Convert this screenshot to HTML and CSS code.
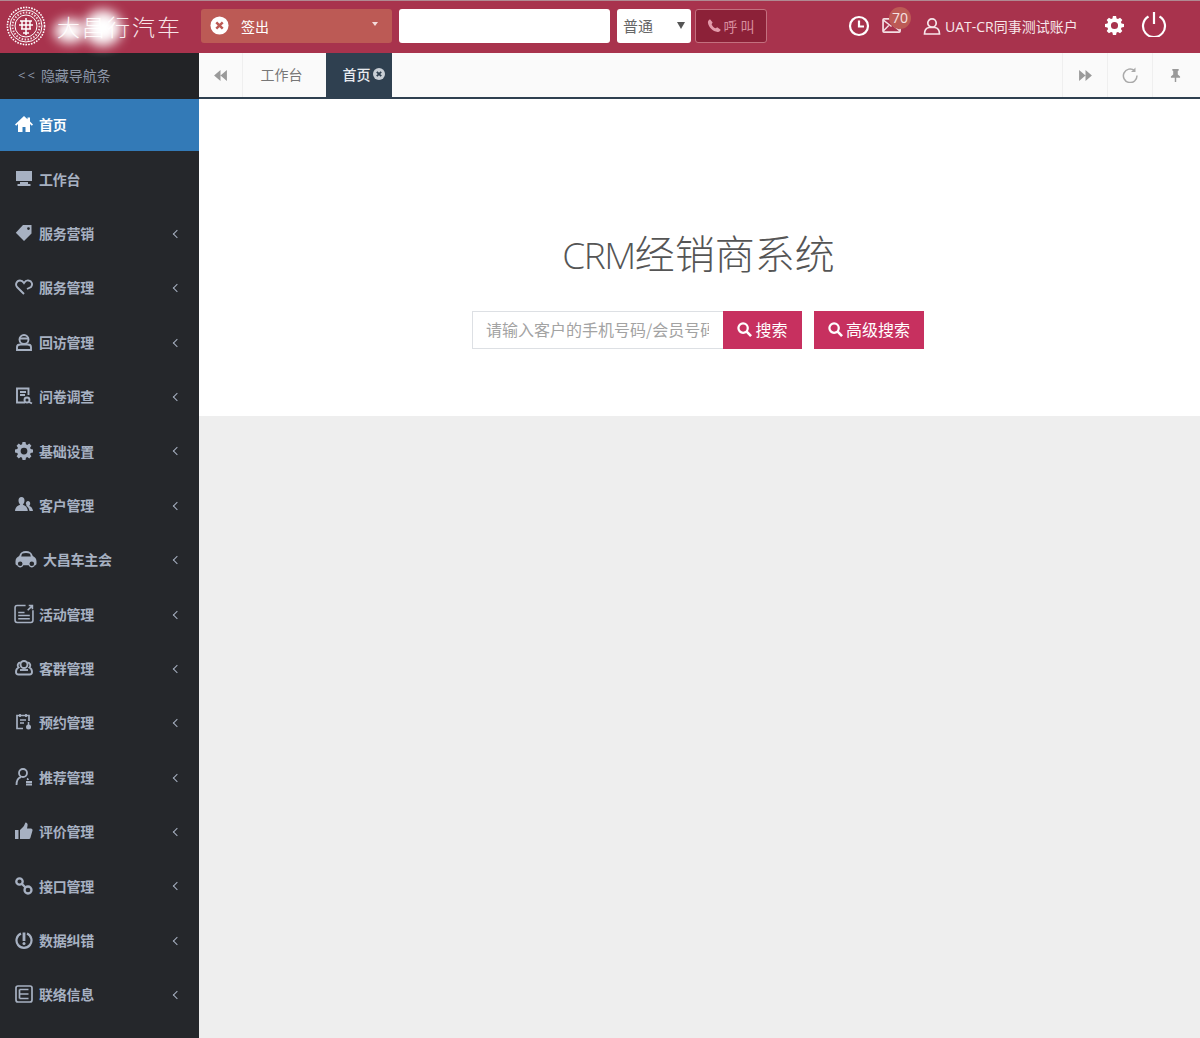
FILE: index.html
```html
<!DOCTYPE html>
<html lang="zh">
<head>
<meta charset="utf-8">
<title>CRM经销商系统</title>
<link rel="stylesheet" href="styles.css">
</head>
<body>
<header class="topbar">
  <div class="logo">
    <svg class="seal" viewBox="0 0 40 40" width="40" height="40"><circle cx="20" cy="20" r="18.6" fill="none" stroke="#fff" stroke-width="1.6" stroke-dasharray="1.6 1.2"/><circle cx="20" cy="20" r="16" fill="none" stroke="#fff" stroke-width="1"/><circle cx="20" cy="20" r="11" fill="none" stroke="#fff" stroke-width="1"/><circle cx="20" cy="20" r="13.5" fill="none" stroke="#fff" stroke-width="2" stroke-dasharray="1.5 1.5" opacity=".8"/><path d="M14 15h12M13 19h14M15 23h10M17 27h6M20 12v17M16 15v8M24 15v8" stroke="#fff" stroke-width="1.5" fill="none"/></svg>
    <span class="logo-text">大昌行汽车</span>
    <span class="smudge smudge-a"></span>
    <span class="smudge smudge-b"></span>
  </div>
  <div class="status">
    <svg viewBox="0 0 20 20" width="19" height="19"><circle cx="10" cy="10" r="9.5" fill="#fff"/><path d="M6.6 6.6l6.8 6.8M13.4 6.6l-6.8 6.8" stroke="#bc5a55" stroke-width="2.6"/></svg>
    <span class="status-label">签出</span>
    <span class="caret"></span>
  </div>
  <input class="phone-input" type="text" aria-label="电话">
  <div class="line-select"><span>普通</span><span class="select-arrow"></span></div>
  <button class="call-btn" type="button">
    <svg viewBox="0 0 16 16" width="15" height="15"><path d="M3.2 1.2L6 4.8 4.9 6.600c.7 1.900 2.300 3.600 4.300 4.400l1.700-1.200 3.700 2.700c-.5 1.600-1.700 2.500-3.200 2.300C6 14.200 1.800 9.800 1 5c-.2-1.600.6-3 2.200-3.800z" fill="#e39aaa"/></svg>
    <span>呼 叫</span>
  </button>
  <div class="top-right">
    <svg class="t-clock" viewBox="0 0 22 22" width="22" height="22"><circle cx="11" cy="11" r="9" fill="none" stroke="#fff" stroke-width="2.200"/><path d="M11 5.500V11.500H16" fill="none" stroke="#fff" stroke-width="2.200"/></svg>
    <div class="mail">
      <svg viewBox="0 0 22 18" width="21" height="17"><rect x="1" y="2" width="18" height="14" rx="1" fill="none" stroke="#f4dfe4" stroke-width="1.800"/><path d="M1 3l9 7M1 15l6-6M19 15l-7-6" fill="none" stroke="#f4dfe4" stroke-width="1.500"/></svg>
      <span class="badge">70</span>
    </div>
    <svg class="t-user" viewBox="0 0 18 18" width="18" height="18"><circle cx="9" cy="6" r="4.200" fill="none" stroke="#f7e6ea" stroke-width="1.700"/><path d="M1.500 17c0-3.600 1.700-6 4.600-6.500h5.800c2.900.5 4.600 2.900 4.600 6.500z" fill="none" stroke="#f7e6ea" stroke-width="1.700"/></svg>
    <span class="user-name">UAT-CR同事测试账户</span>
    <svg class="t-gear" viewBox="0 0 24 24" width="19" height="19"><path fill="#fff" fill-rule="evenodd" d="M10 1h4l.6 3.100 1.800.8L19 3.100 21.900 6l-1.800 2.600.8 1.800L24 11v4l-3.100.6-.8 1.800 1.800 2.600L19 22.900l-2.600-1.800-1.800.8L14 25h-4l-.6-3.100-1.800-.8L5 22.900 2.100 20l1.800-2.600-.8-1.800L0 15v-4l3.100-.6.800-1.800L2.100 6 5 3.100l2.600 1.800 1.800-.8zM12 8.500a4.500 4.500 0 1 0 0 9 4.500 4.500 0 0 0 0-9z" transform="translate(0 -1)"/></svg>
    <svg class="t-power" viewBox="0 0 26 26" width="26" height="26"><path d="M7.500 5.500a11 11 0 1 0 11 0M13 1v12" fill="none" stroke="#fff" stroke-width="2.200"/></svg>
  </div>
</header>

<div class="shell">
  <aside class="sidebar">
    <div class="collapse"><span class="chev">&lt;&lt;</span> 隐藏导航条</div>
    <nav>
      <a class="nav-item active"><svg class="ico" viewBox="0 0 18 18"><path fill="#fff" d="M9 1L0 9.400l1.200 1.300L3 9.100V17h4.500v-5h3v5H15V9.100l1.800 1.600L18 9.400 15 6.600V2.500h-2.500v1.800z"/></svg><span>首页</span></a>
      <a class="nav-item"><svg class="ico" viewBox="0 0 18 18"><path fill="#a7b1c2" d="M1 1h16v10H1zM5 12h8v2h2.500v2h-13v-2H5z"/></svg><span>工作台</span></a>
      <a class="nav-item more"><svg class="ico" viewBox="0 0 18 18"><path fill="#a7b1c2" d="M8 1h8.500v8.500L9 17 .8 8.800zM13.500 3.200a1.400 1.400 0 1 0 0 2.800 1.400 1.400 0 0 0 0-2.800z"/></svg><span>服务营销</span></a>
      <a class="nav-item more"><svg class="ico" viewBox="0 0 18 18"><path fill="none" stroke="#a7b1c2" stroke-width="1.900" d="M9 16L2 9C0 6.500 1.500 2.500 5 2.500c2 0 3 1 4 2.500 1-1.500 2.500-3 4.500-2.500 3.500.5 4.500 4 2.500 6.500L12 11"/></svg><span>服务管理</span></a>
      <a class="nav-item more"><svg class="ico" viewBox="0 0 18 18"><g fill="none" stroke="#a7b1c2" stroke-width="1.900"><circle cx="9" cy="6.500" r="4.500"/><path d="M4.500 5.500h9M2 17v-3c0-1.500 1.500-2.500 3.500-2.500h7c2 0 3.500 1 3.500 2.500v3z"/></g></svg><span>回访管理</span></a>
      <a class="nav-item more"><svg class="ico" viewBox="0 0 18 18"><g fill="none" stroke="#a7b1c2" stroke-width="1.900"><path d="M13.500 8V1.500H2v14h8"/><path d="M5 5h6M5 8h5"/><circle cx="12" cy="13" r="2.500"/><path d="M14 15l3 1.500"/></g></svg><span>问卷调查</span></a>
      <a class="nav-item more"><svg class="ico" viewBox="0 0 24 24"><path fill="#a7b1c2" fill-rule="evenodd" d="M10 0h4l.6 3.100 1.800.8L19 2.100 21.900 5l-1.800 2.600.8 1.800L24 10v4l-3.100.6-.8 1.800 1.800 2.600L19 21.900l-2.600-1.800-1.800.8L14 24h-4l-.6-3.100-1.800-.8L5 21.900 2.100 19l1.800-2.600-.8-1.800L0 14v-4l3.100-.6.800-1.800L2.100 5 5 2.100l2.600 1.800 1.800-.8zM12 7.500a4.500 4.500 0 1 0 0 9 4.500 4.500 0 0 0 0-9z"/></svg><span>基础设置</span></a>
      <a class="nav-item more"><svg class="ico" viewBox="0 0 18 18"><path fill="#a7b1c2" d="M6.500 1c2 0 3 1.500 3 3.500S8.500 8 7.800 8.800c2.700.8 4.700 2.400 5 6.200H0c.300-3.800 2.300-5.400 5.200-6.200C4.500 8 3.500 6.500 3.500 4.500S4.500 1 6.500 1zM13 5c1.300 0 2.200 1 2.200 2.500 0 1-.5 2-1 2.600 2 .6 3.300 2 3.800 4.900h-3.500c-.3-2.200-1.300-3.800-3.200-5 .4-.7 0-1.500-.5-2.400C11 6 11.800 5 13 5z"/></svg><span>客户管理</span></a>
      <a class="nav-item more wide"><svg class="ico car" viewBox="0 0 22 18"><path fill="#a7b1c2" fill-rule="evenodd" d="M11 1c3.500 0 5.800 1.500 6.800 5 2.200 1 3.700 2.700 3.700 5.200v2.300c0 1.100-.7 1.800-1.700 1.800-.5 1.300-1.600 2.200-3 2.200s-2.600-.9-3.100-2.200H8.300c-.5 1.300-1.700 2.200-3.100 2.200s-2.500-.9-3-2.200c-1 0-1.700-.7-1.700-1.800v-2.300c0-2.500 1.500-4.200 3.700-5.200C5.200 2.500 7.500 1 11 1zM7 3.800L6.200 6.500h9.600L15 3.800c-1-.6-2.400-.9-4-.9s-3 .3-4 .9zM5.200 11.500a2.300 2.300 0 1 0 0 4.600 2.300 2.300 0 0 0 0-4.600zm11.600 0a2.300 2.300 0 1 0 0 4.600 2.300 2.300 0 0 0 0-4.600z"/></svg><span>大昌车主会</span></a>
      <a class="nav-item more"><svg class="ico big" viewBox="0 0 19 19"><g fill="none" stroke="#a7b1c2" stroke-width="1.500"><path d="M11 1.500H3C1.800 1.500 1 2.300 1 3.500v12c0 1.200.8 2 2 2h13c1.200 0 2-.8 2-2V6"/><path d="M4 8h6M4 11h11M4 14h11M13 6l4.500-4.500M14 1.500h3.500V5"/></g></svg><span>活动管理</span></a>
      <a class="nav-item more"><svg class="ico" viewBox="0 0 18 18"><g fill="none" stroke="#a7b1c2" stroke-width="1.900"><circle cx="9" cy="5.500" r="3.500"/><path d="M5.500 3.500C2.500 3.500 2 7 3.500 8.500 1.500 9.500 1 11 1 13c0 1.500 1 2.500 2.500 2.500h11c1.500 0 2.500-1 2.500-2.500 0-2-.5-3.500-2.500-4.500C16 7 15.500 3.500 12.500 3.500"/><path d="M5 11h8"/></g></svg><span>客群管理</span></a>
      <a class="nav-item more"><svg class="ico" viewBox="0 0 18 18"><g fill="none" stroke="#a7b1c2" stroke-width="1.700"><path d="M14 8V2.500H2v13h6"/><path d="M5 1v3M11 1v3M5 7h6M5 10h4"/></g><circle cx="13.500" cy="14" r="2.500" fill="#a7b1c2"/><path d="M13.500 9v3" stroke="#a7b1c2" stroke-width="1.500"/></svg><span>预约管理</span></a>
      <a class="nav-item more"><svg class="ico" viewBox="0 0 18 18"><g fill="none" stroke="#a7b1c2" stroke-width="1.800"><circle cx="8" cy="5" r="4"/><path d="M1.500 17c0-4 1.500-7 4.500-7.800M12 10.500c.7.400 1 1 1.200 1.500M11 14h6M11 16.500h6"/></g></svg><span>推荐管理</span></a>
      <a class="nav-item more"><svg class="ico" viewBox="0 0 18 18"><path fill="#a7b1c2" d="M0 8h3.500v9H0zM5 8l3.500-3.500C9.500 3 10 1.500 10.500.500c1.500 0 2.500 1.500 2 3.500l-.5 2.500h4c1 0 1.800 1 1.500 2l-2 7c-.3 1-1 1.500-2 1.500H5z"/></svg><span>评价管理</span></a>
      <a class="nav-item more"><svg class="ico" viewBox="0 0 18 18"><g fill="none" stroke="#a7b1c2" stroke-width="2.300"><circle cx="4.500" cy="4.500" r="3.200"/><circle cx="13" cy="13" r="3.500"/><path d="M7 7l3.500 3.500"/></g></svg><span>接口管理</span></a>
      <a class="nav-item more"><svg class="ico" viewBox="0 0 18 18"><path d="M6 2.500a7.500 7.500 0 1 0 6 0" fill="none" stroke="#a7b1c2" stroke-width="2.200"/><path d="M9 1.500v8.500" stroke="#a7b1c2" stroke-width="2.800"/><circle cx="9" cy="12.500" r="1.500" fill="#a7b1c2"/></svg><span>数据纠错</span></a>
      <a class="nav-item more"><svg class="ico" viewBox="0 0 18 18"><g fill="none" stroke="#a7b1c2" stroke-width="1.700"><rect x="1" y="1" width="16" height="16" rx="2"/><path d="M4.500 4.500h9M4.500 9h9M4.500 13.500h9M4.500 4.500v9"/></g></svg><span>联络信息</span></a>
    </nav>
  </aside>

  <main class="content">
    <div class="tabbar">
      <button class="tab-btn" type="button"><svg viewBox="0 0 14 12" width="13" height="11"><path fill="#9a9a9a" d="M7 0v12L0 6zM14 0v12L7 6z"/></svg></button>
      <span class="tab">工作台</span>
      <span class="tab current">首页<svg viewBox="0 0 12 12" width="12" height="12"><circle cx="6" cy="6" r="6" fill="#c9cfd6"/><path d="M3.800 3.800l4.400 4.400M8.200 3.800L3.800 8.200" stroke="#2f4050" stroke-width="1.800"/></svg></span>
      <span class="tab-fill"></span>
      <button class="tab-btn" type="button"><svg viewBox="0 0 14 12" width="13" height="11"><path fill="#9a9a9a" d="M0 0v12l7-6zM7 0v12l7-6z"/></svg></button>
      <button class="tab-btn" type="button"><svg viewBox="0 0 16 16" width="16" height="16"><path d="M12.500 3.500A6.800 6.800 0 1 0 15 8.500" fill="none" stroke="#a9a9a9" stroke-width="1.500"/><path d="M13.500.500v4.500H9z" fill="#a9a9a9"/></svg></button>
      <button class="tab-btn" type="button"><svg viewBox="0 0 12 14" width="11" height="13"><path fill="#9a9a9a" d="M2.500 0h7v1.500L8.500 2v4l2.500 2v1.500H6.800V14H5.200V9.500H1V8l2.500-2V2l-1-.5z"/></svg></button>
    </div>
    <section class="hero">
      <h1><span class="latin">CRM</span>经销商系统</h1>
      <form class="search">
        <input class="search-input" type="text" placeholder="请输入客户的手机号码/会员号码">
        <button class="search-btn first" type="button"><svg viewBox="0 0 16 16" width="15" height="15"><circle cx="6.500" cy="6.500" r="5" fill="none" stroke="#fff" stroke-width="2.400"/><path d="M10.300 10.300L15 15" stroke="#fff" stroke-width="2.800"/></svg>搜索</button>
        <button class="search-btn second" type="button"><svg viewBox="0 0 16 16" width="15" height="15"><circle cx="6.500" cy="6.500" r="5" fill="none" stroke="#fff" stroke-width="2.400"/><path d="M10.300 10.300L15 15" stroke="#fff" stroke-width="2.800"/></svg>高级搜索</button>
      </form>
    </section>
    <section class="blank"></section>
  </main>
</div>
</body>
</html>
```
FILE: styles.css
```css
* { box-sizing: border-box; }
html, body { height: 100%; }
body {
  margin: 0;
  height: 1038px;
  overflow: hidden;
  display: flex;
  flex-direction: column;
  font-family: "Noto Sans CJK SC", "Open Sans", sans-serif;
  font-size: 14px;
  background: #eee;
}
.topbar {
  height: 53px;
  flex: none;
  display: flex;
  align-items: center;
  background: #a8334d;
  border-top: 1px solid #b08a92;
  padding-bottom: 3px;
}
.logo {
  position: relative;
  width: 201px;
  height: 40px;
  flex: none;
  display: flex;
  align-items: center;
  padding-left: 6px;
  gap: 11px;
  color: #f7e4e8;
}
.seal { flex: none; }
.logo-text {
  font-size: 23px;
  font-weight: 300;
  letter-spacing: 2px;
  white-space: nowrap;
}
.smudge {
  position: absolute;
  background: #fff;
  border-radius: 50%;
  filter: blur(6px);
}
.smudge-a { left: 54px; top: 13px; width: 32px; height: 24px; }
.smudge-b { left: 84px; top: 4px; width: 38px; height: 36px; }
.status {
  width: 191px;
  height: 34px;
  flex: none;
  display: flex;
  align-items: center;
  background: #bc5a55;
  border-radius: 3px;
  padding: 0 10px 0 9px;
  color: #fff;
}
.status-label { margin-left: 12px; font-size: 14px; }
.caret {
  margin-left: auto;
  margin-right: 4px;
  border: 3.500px solid transparent;
  border-top: 4px solid #f4dcdc;
  border-bottom: 0;
  margin-top: -4px;
}
.phone-input {
  width: 211px;
  height: 34px;
  flex: none;
  margin-left: 7px;
  border: 0;
  border-radius: 3px;
  background: #fff;
}
.line-select {
  width: 74px;
  height: 34px;
  flex: none;
  margin-left: 7px;
  display: flex;
  align-items: center;
  justify-content: space-between;
  padding: 0 6px;
  border-radius: 3px;
  background: #fff;
  color: #666;
  font-size: 15px;
}
.select-arrow {
  border: 4px solid transparent;
  border-top: 7px solid #555;
  border-bottom: 0;
}
.call-btn {
  width: 72px;
  height: 34px;
  flex: none;
  margin-left: 4px;
  display: flex;
  align-items: center;
  justify-content: center;
  gap: 1px;
  padding: 0;
  background: #8c2138;
  border: 1px solid #c4707f;
  border-radius: 3px;
  color: #d78d9e;
  font: 14px "Noto Sans CJK SC", sans-serif;
}
.top-right {
  flex: 1;
  display: flex;
  align-items: center;
  padding-left: 81px;
  color: #f7e6ea;
}
.mail { position: relative; margin-left: 12px; height: 17px; display: flex; }
.badge {
  position: absolute;
  left: 7px;
  top: -10px;
  width: 22px;
  height: 22px;
  border-radius: 50%;
  background: #bc5a55;
  color: #f5e3e3;
  font: 14px/22px "Open Sans", sans-serif;
  text-align: center;
}
.t-user { margin-left: 20px; }
.user-name { margin-left: 4px; font: 14px "Open Sans", "Noto Sans CJK SC", sans-serif; white-space: nowrap; }
.t-gear { margin-left: 27px; }
.t-power { margin-left: 17px; margin-top: -3px; }

.shell { flex: 1; display: flex; min-height: 0; }
.sidebar { width: 199px; flex: none; background: #25272b; }
.collapse {
  height: 46px;
  background: #222326;
  display: flex;
  align-items: center;
  padding: 0 0 3px 18px;
  gap: 4px;
  color: #8d96a8;
  font-size: 14px;
}
.chev { letter-spacing: 2px; font-family: "Open Sans", sans-serif; font-size: 13px; }
.nav-item {
  height: 54.400px;
  display: flex;
  align-items: center;
  padding: 0 0 2px 15px;
  position: relative;
  color: #a7b1c2;
  font-size: 14px;
  font-weight: 700;
}
.nav-item span { margin-left: 6px; letter-spacing: -.25px; }
.ico { width: 18px; height: 18px; flex: none; }
.car { width: 22px; }
.big { width: 20px; height: 20px; margin-left: -1px; margin-right: -1px; }
.active { height: 52px; margin-bottom: 1.400px; background: #337ab7; color: #fff; }
.more::after {
  content: "";
  position: absolute;
  left: 174px;
  top: 24px;
  width: 5px;
  height: 5px;
  border-left: 1.500px solid #a7b1c2;
  border-bottom: 1.500px solid #a7b1c2;
  transform: rotate(45deg);
}

.content { flex: 1; display: flex; flex-direction: column; min-width: 0; }
.tabbar {
  height: 46px;
  flex: none;
  display: flex;
  background: #fafafa;
  border-bottom: 2px solid #2f4050;
}
.tab-btn {
  width: 45px;
  flex: none;
  display: flex;
  align-items: center;
  justify-content: center;
  padding: 0;
  background: transparent;
  border: 0;
  border-right: 1px solid #efefef;
}
.tab-btn:nth-last-child(-n+3) { border-right: 0; border-left: 1px solid #efefef; }
.tab-btn:first-child { width: 44px; }
.tabbar .tab-btn:last-child { margin-right: 3px; }
.tab {
  width: 83px;
  display: flex;
  align-items: center;
  justify-content: center;
  padding: 0 6px 2px 0;
  color: #777;
  font-size: 14px;
}
.tab.current {
  width: 66px;
  background: #2f4050;
  color: #e8ebef;
  font-weight: 500;
  gap: 2px;
  padding: 0 0 2px 9px;
}
.tab-fill { flex: 1; }
.hero {
  height: 317px;
  flex: none;
  background: #fff;
  text-align: center;
}
.hero h1 {
  margin: 128px 0 0;
  padding-right: 2px;
  height: 50px;
  font-size: 40px;
  line-height: 50px;
  font-weight: 300;
  color: #555;
}
.latin {
  font-family: "Open Sans", sans-serif;
  font-weight: 300;
  font-size: 37px;
  letter-spacing: -1.500px;
  margin-right: 0;
}
.search {
  display: flex;
  margin: 34px 0 0 273px;
}
.search-input {
  width: 251px;
  height: 38px;
  padding: 0 14px 2px 13px;
  border: 1px solid #dde0e4;
  border-right: 0;
  background: #fff;
  font: 16px "Noto Sans CJK SC", sans-serif;
  color: #555;
  outline: 0;
}
.search-input::placeholder { color: #a3a3a3; opacity: 1; }
.search-btn {
  height: 38px;
  display: flex;
  align-items: center;
  justify-content: center;
  gap: 3px;
  padding: 0 0 2px;
  border: 0;
  background: #c7305f;
  color: #fff;
  font: 16px "Noto Sans CJK SC", sans-serif;
}
.first { width: 79px; }
.second { width: 110px; margin-left: 12px; }
.blank { flex: 1; background: #eee; }
```
